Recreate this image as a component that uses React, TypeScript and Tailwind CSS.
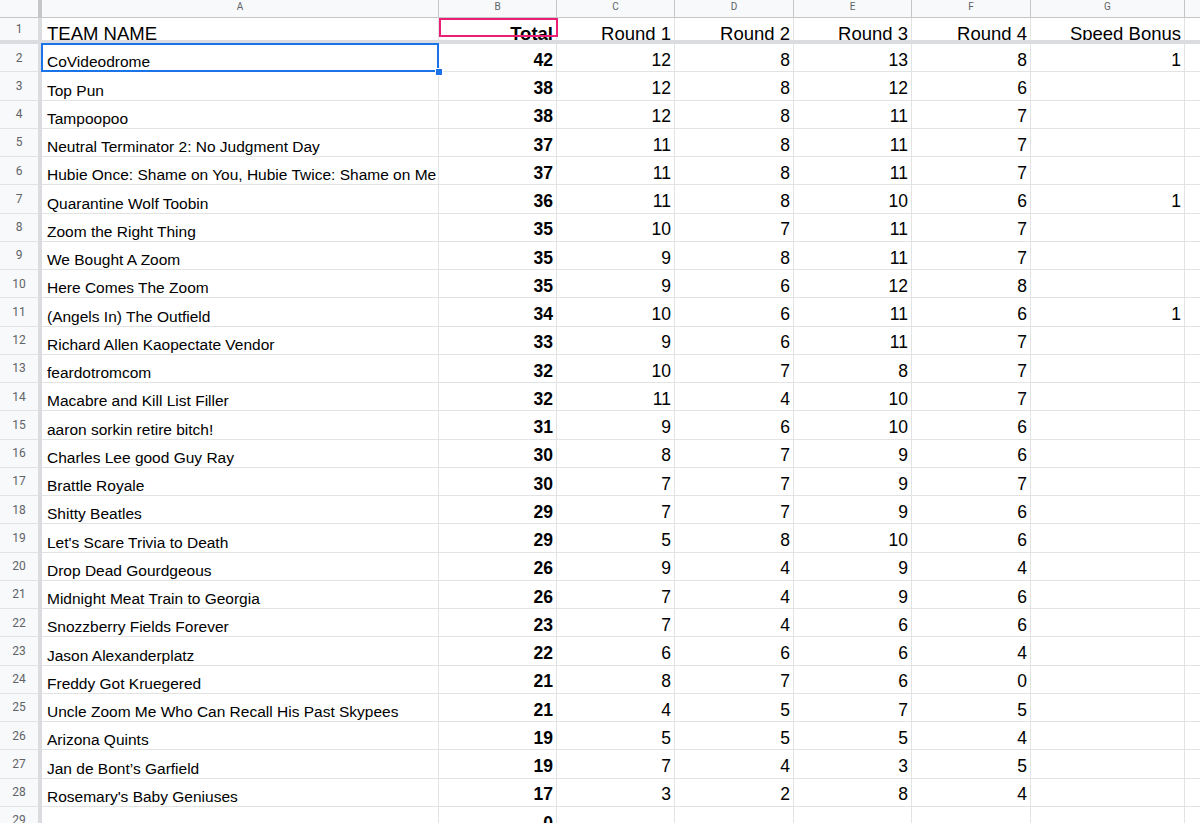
import React from "react";

type Row = [string, number | null, number | null, number | null, number | null, number | null, number | null];

const rows: Row[] = [
  ["CoVideodrome", 42, 12, 8, 13, 8, 1],
  ["Top Pun", 38, 12, 8, 12, 6, null],
  ["Tampoopoo", 38, 12, 8, 11, 7, null],
  ["Neutral Terminator 2: No Judgment Day", 37, 11, 8, 11, 7, null],
  ["Hubie Once: Shame on You, Hubie Twice: Shame on Me", 37, 11, 8, 11, 7, null],
  ["Quarantine Wolf Toobin", 36, 11, 8, 10, 6, 1],
  ["Zoom the Right Thing", 35, 10, 7, 11, 7, null],
  ["We Bought A Zoom", 35, 9, 8, 11, 7, null],
  ["Here Comes The Zoom", 35, 9, 6, 12, 8, null],
  ["(Angels In) The Outfield", 34, 10, 6, 11, 6, 1],
  ["Richard Allen Kaopectate Vendor", 33, 9, 6, 11, 7, null],
  ["feardotromcom", 32, 10, 7, 8, 7, null],
  ["Macabre and Kill List Filler", 32, 11, 4, 10, 7, null],
  ["aaron sorkin retire bitch!", 31, 9, 6, 10, 6, null],
  ["Charles Lee good Guy Ray", 30, 8, 7, 9, 6, null],
  ["Brattle Royale", 30, 7, 7, 9, 7, null],
  ["Shitty Beatles", 29, 7, 7, 9, 6, null],
  ["Let's Scare Trivia to Death", 29, 5, 8, 10, 6, null],
  ["Drop Dead Gourdgeous", 26, 9, 4, 9, 4, null],
  ["Midnight Meat Train to Georgia", 26, 7, 4, 9, 6, null],
  ["Snozzberry Fields Forever", 23, 7, 4, 6, 6, null],
  ["Jason Alexanderplatz", 22, 6, 6, 6, 4, null],
  ["Freddy Got Kruegered", 21, 8, 7, 6, 0, null],
  ["Uncle Zoom Me Who Can Recall His Past Skypees", 21, 4, 5, 7, 5, null],
  ["Arizona Quints", 19, 5, 5, 5, 4, null],
  ["Jan de Bont\u2019s Garfield", 19, 7, 4, 3, 5, null],
  ["Rosemary's Baby Geniuses", 17, 3, 2, 8, 4, null],
  ["", 0, null, null, null, null, null],
];

const numW = ["w-[118px]", "w-[118px]", "w-[119px]", "w-[118px]", "w-[119px]", "w-[154px]"];
const letters = ["B", "C", "D", "E", "F", "G"];
const headers = ["Total", "Round 1", "Round 2", "Round 3", "Round 4", "Speed Bonus"];

function RowHead({ n, h }: { n: number; h: string }) {
  return (
    <div
      className={`w-[38px] shrink-0 ${h} flex items-center justify-center bg-[#f8f9fa] border-b border-[#e2e3e3] text-[12px] text-[#5f6368] font-['Roboto',Arial,sans-serif]`}
    >
      {n}
    </div>
  );
}

export default function App() {
  return (
    <div className="w-[1200px] h-[823px] overflow-hidden bg-white font-['Liberation_Sans',Arial,sans-serif] text-black">
      {/* column letters */}
      <div className="flex h-[18px]">
        <div className="w-[38px] shrink-0 bg-[#f8f9fa] border-b border-[#c4c7c5]" />
        <div className="w-[4px] shrink-0 bg-[#c4c7c5]" />
        <div className="w-[397px] shrink-0 bg-[#f8f9fa] border-r border-b border-[#c4c7c5] flex justify-center pt-[1.5px] text-[10px] leading-none text-[#5f6368] font-['Roboto',Arial,sans-serif]">
          A
        </div>
        {letters.map((l, i) => (
          <div
            key={l}
            className={`${numW[i]} shrink-0 bg-[#f8f9fa] border-r border-b border-[#c4c7c5] flex justify-center pt-[1.5px] text-[10px] leading-none text-[#5f6368] font-['Roboto',Arial,sans-serif]`}
          >
            {l}
          </div>
        ))}
        <div className="flex-1 bg-[#f8f9fa] border-b border-[#c4c7c5]" />
      </div>

      {/* row 1 */}
      <div className="flex h-[22px]">
        <RowHead n={1} h="h-[22px] border-b-0" />
        <div className="w-[4px] shrink-0 bg-[#dadce0]" />
        <div className="w-[397px] shrink-0 border-r border-[#e2e3e3] flex items-end overflow-hidden pl-[5px]">
          <span className="text-[18.5px] leading-none mb-[-3px] whitespace-nowrap">TEAM NAME</span>
        </div>
        {headers.map((t, i) => (
          <div
            key={t}
            className={`${numW[i]} shrink-0 border-r border-[#e2e3e3] flex items-end justify-end pr-[3px] ${i === 0 ? "relative" : "overflow-hidden"}`}
          >
            <div className="overflow-hidden h-full flex items-end">
              <span className={`text-[18.5px] leading-none mb-[-3px] whitespace-nowrap ${i === 0 ? "font-bold" : ""}`}>{t}</span>
            </div>
            {i === 0 && (
              <div className="absolute left-0 top-0 w-[119px] h-[19px] border-2 border-[#ec1f76] z-10" />
            )}
          </div>
        ))}
        <div className="flex-1" />
      </div>

      {/* freeze bar */}
      <div className="h-[4px] bg-[#dadce0]" />

      {/* data rows */}
      {rows.map((r, idx) => {
        const [name, ...nums] = r;
        return (
          <div key={idx} className="flex h-[28.25px]">
            <RowHead n={idx + 2} h="h-[28.25px]" />
            <div className="w-[4px] shrink-0 bg-[#dadce0]" />
            <div className="relative w-[397px] shrink-0 border-r border-b border-[#e2e3e3] flex items-end pl-[5px]">
              <div className="overflow-hidden whitespace-nowrap w-full text-[15.5px] leading-[1.15]">
                {name}
              </div>
              {idx === 0 && (
                <>
                  <div className="absolute left-[-1px] top-[-1px] right-[-1px] bottom-[-1px] border-2 border-[#1a73e8] z-10" />
                  <div className="absolute right-[-5px] bottom-[-5px] w-[8px] h-[8px] bg-[#1a73e8] border border-white z-20" />
                </>
              )}
            </div>
            {nums.map((v, i) => (
              <div
                key={i}
                className={`${numW[i]} shrink-0 border-r border-b border-[#e2e3e3] flex items-end justify-end pr-[3px] pb-[2px] overflow-hidden`}
              >
                <span className={`text-[17.5px] leading-none ${i === 0 ? "font-bold" : ""}`}>
                  {v === null ? "" : v}
                </span>
              </div>
            ))}
            <div className="flex-1 border-b border-[#e2e3e3]" />
          </div>
        );
      })}
    </div>
  );
}
